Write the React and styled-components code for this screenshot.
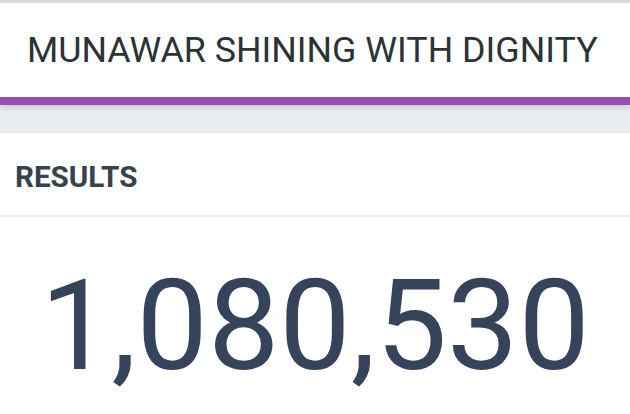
import React from 'react';
import styled, { createGlobalStyle } from 'styled-components';

const GlobalStyle = createGlobalStyle`
  html, body {
    margin: 0;
    padding: 0;
    background: #e9ecef;
    font-family: Roboto, "Liberation Sans", sans-serif;
  }
`;

const Page = styled.div`
  width: 630px;
  height: 414px;
  overflow: hidden;
  background: #e9ecef;
  border-top: 3px solid #d5dde0;
  box-sizing: border-box;
`;

const Header = styled.div`
  background: #ffffff;
  height: 94px;
  display: flex;
  align-items: center;
  padding-left: 27px;
  border-bottom: 8px solid #9b4db5;
  box-shadow: 0 3px 5px rgba(0, 0, 0, 0.12);
  position: relative;
  z-index: 1;
`;

const Title = styled.h1`
  margin: 0;
  font-size: 35.8px;
  font-weight: 400;
  color: #2b3337;
  white-space: nowrap;
`;

const Card = styled.section`
  margin-top: 28px;
  background: #ffffff;
  height: 300px;
`;

const CardHead = styled.div`
  height: 84px;
  display: flex;
  align-items: center;
  padding: 6px 0 0 15px;
  border-bottom: 2px solid #eeeeee;
  box-sizing: border-box;
`;

const Label = styled.h2`
  margin: 0;
  font-size: 29.6px;
  font-weight: 700;
  color: #37434c;
`;

const Value = styled.div`
  text-align: center;
  font-size: 127px;
  font-weight: 400;
  color: #35445a;
  line-height: 1;
  padding-top: 45px;
`;

export default function App() {
  return (
    <>
      <GlobalStyle />
      <Page>
        <Header>
          <Title>MUNAWAR SHINING WITH DIGNITY</Title>
        </Header>
        <Card>
          <CardHead>
            <Label>RESULTS</Label>
          </CardHead>
          <Value>1,080,530</Value>
        </Card>
      </Page>
    </>
  );
}
